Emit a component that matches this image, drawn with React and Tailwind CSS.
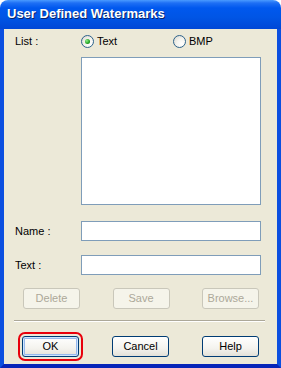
import React from "react";

const Radio = ({ label, checked }) => (
  <div className="flex items-center gap-[3px]">
    <span className="relative flex h-[13px] w-[13px] items-center justify-center rounded-full border border-[#2C628B] bg-[radial-gradient(circle_at_70%_70%,#ffffff_0%,#f4f3ee_45%,#d6d3c8_100%)]">
      {checked && (
        <span className="h-[5px] w-[5px] rounded-full bg-[radial-gradient(circle_at_35%_35%,#8ef08a_0%,#21a121_60%,#0f7a12_100%)]" />
      )}
    </span>
    <span className="leading-none">{label}</span>
  </div>
);

const Button = ({ children, disabled, isDefault }) => {
  const base =
    "flex h-[21px] w-[57px] items-center justify-center rounded-[3px] border text-[11px] leading-none";
  if (disabled) {
    return (
      <button className={`${base} border-[#C9C7BA] bg-[#F5F4EA] text-[#ACA899]`}>
        {children}
      </button>
    );
  }
  return (
    <button
      className={`${base} border-[#003C74] bg-[linear-gradient(#ffffff,#f4f3ee_60%,#e3e1d8)] text-black ${
        isDefault
          ? "shadow-[inset_0_0_0_1px_#CEE7FF,inset_0_0_0_2px_#97B8EC] outline-2 outline-offset-[2px] outline-[#E8000B]"
          : ""
      }`}
    >
      {children}
    </button>
  );
};

const Field = ({ label }) => (
  <div className="flex items-center">
    <span className="w-[66px]">{label}</span>
    <div className="h-[20px] flex-1 border border-[#7F9DB9] bg-white" />
  </div>
);

export default function App() {
  return (
    <div className="flex h-[368px] w-[281px] flex-col font-['Liberation_Sans',Arial,sans-serif] text-[11px] text-black">
      {/* title bar */}
      <div className="flex h-[29px] items-center rounded-t-[8px] bg-[linear-gradient(#4A9BFF_0px,#1E6FF5_3px,#0058EE_8px,#0055E5_60%,#0047D6_100%)] pl-[7px]">
        <span className="pb-[1px] font-['Liberation_Sans',Arial,sans-serif] text-[13px] font-bold text-white [text-shadow:1px_1px_0_#0A246A]">
          User Defined Watermarks
        </span>
      </div>

      {/* frame */}
      <div className="flex flex-1 border-x-4 border-b-4 border-x-[#0B4FE0] border-b-[#0624B8]">
        <div className="flex flex-1 flex-col bg-[#ECE9D8] pl-[11px] pr-[16px] pt-[6px]">
          <div className="flex h-[13px] items-center">
            <span className="w-[66px]">List :</span>
            <div className="w-[92px]">
              <Radio label="Text" checked />
            </div>
            <Radio label="BMP" />
          </div>

          <div className="ml-[66px] mt-[9px] h-[148px] border border-[#7F9DB9] bg-white" />

          <div className="mt-[16px]">
            <Field label="Name :" />
          </div>
          <div className="mt-[14px]">
            <Field label="Text :" />
          </div>

          <div className="ml-[8px] mr-[2px] mt-[13px] flex justify-between">
            <Button disabled>Delete</Button>
            <Button disabled>Save</Button>
            <Button disabled>Browse...</Button>
          </div>

          <div className="-ml-[1px] -mr-[4px] mt-[11px] border-t border-b border-t-[#ACA899] border-b-white" />

          <div className="ml-[7px] mr-[2px] mt-[14px] flex justify-between">
            <Button isDefault>OK</Button>
            <Button>Cancel</Button>
            <Button>Help</Button>
          </div>
        </div>
      </div>
    </div>
  );
}
